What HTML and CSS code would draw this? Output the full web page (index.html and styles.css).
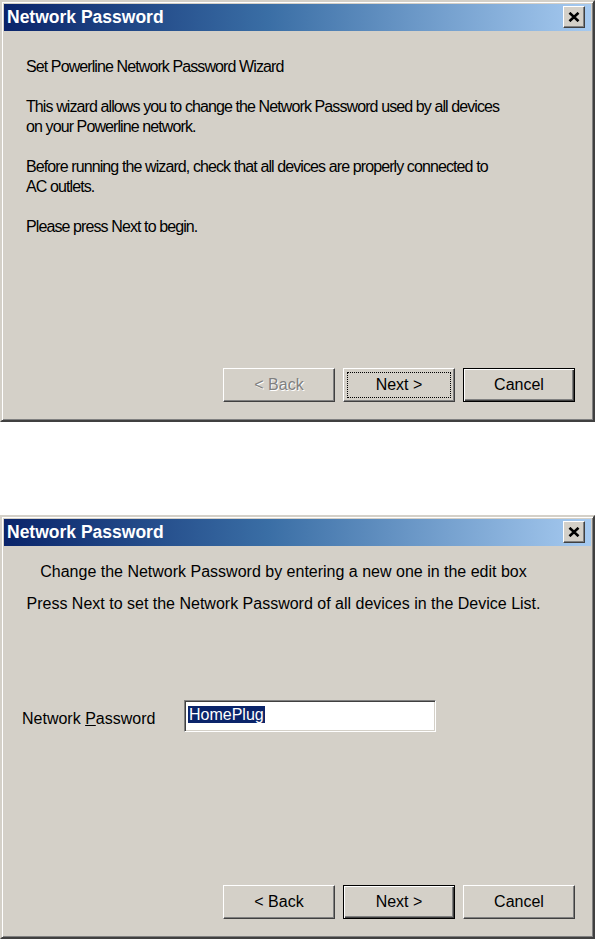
FILE: index.html
```html
<!DOCTYPE html>
<html lang="en">
  <head>
    <meta charset="UTF-8" />
    <meta name="viewport" content="width=device-width, initial-scale=1.0" />
    <title>Network Password</title>
    <link rel="stylesheet" href="styles.css">
  </head>

  <body>
    <!-- step 1: intro -->
    <div class="dialog dialog-intro">
      <div class="titlebar">
        <span class="title">Network Password</span>
        <button class="close" type="button">
          <svg width="12" height="10" viewBox="0 0 12 10">
            <path d="M1.5 0.8 L10.5 9.2 M10.5 0.8 L1.5 9.2" stroke="#000" stroke-width="2.6" />
          </svg>
        </button>
      </div>

      <div class="body intro">
        <p>Set Powerline Network Password Wizard</p>
        <p>This wizard allows you to change the Network Password used by all devices on your Powerline network.</p>
        <p>Before running the wizard, check that all devices are properly connected to AC outlets.</p>
        <p>Please press Next to begin.</p>
      </div>

      <div class="buttons">
        <button class="btn" type="button" disabled>&lt; Back</button>
        <button class="btn focused" type="button"><span class="focus">Next &gt;</span></button>
        <button class="btn default" type="button">Cancel</button>
      </div>
    </div>

    <!-- step 2: enter password -->
    <div class="dialog dialog-edit">
      <div class="titlebar">
        <span class="title">Network Password</span>
        <button class="close" type="button">
          <svg width="12" height="10" viewBox="0 0 12 10">
            <path d="M1.5 0.8 L10.5 9.2 M10.5 0.8 L1.5 9.2" stroke="#000" stroke-width="2.6" />
          </svg>
        </button>
      </div>

      <div class="body centered">
        <p class="line1">Change the Network Password by entering a new one in the edit box</p>
        <p class="line2">Press Next to set the Network Password of all devices in the Device List.</p>

        <div class="field-row">
          <label for="pw">Network <u>P</u>assword</label>
          <div class="edit" id="pw"><span class="sel">HomePlug</span></div>
        </div>
      </div>

      <div class="buttons">
        <button class="btn" type="button">&lt; Back</button>
        <button class="btn default" type="button">Next &gt;</button>
        <button class="btn" type="button">Cancel</button>
      </div>
    </div>
  </body>
</html>
```

FILE: styles.css
```css
* {
  margin: 0;
  padding: 0;
  box-sizing: border-box;
}

body {
  font-family: "Liberation Sans", Arial, sans-serif;
  font-size: 16px;
  line-height: 20px;
  color: #000;
  background: #fff;
  width: 595px;
}

.dialog {
  width: 595px;
  background: #d4d0c8;
  border: 2px solid;
  border-color: #d4d0c8 #404040 #404040 #d4d0c8;
  box-shadow: inset 1px 1px #fff, inset -1px -1px #808080;
  padding: 2px;
  display: flex;
  flex-direction: column;
}

.dialog-intro {
  height: 422px;
}

.dialog-edit {
  height: 424px;
  margin-top: 93px;
}

.titlebar {
  height: 27px;
  display: flex;
  align-items: center;
  justify-content: space-between;
  padding: 0 6px 1px 3px;
  background: linear-gradient(to right, #0a246a, #3a6ea5 45%, #a6caf0);
}

.title {
  color: #fff;
  font-weight: bold;
  font-size: 17.5px;
}

.close {
  width: 22px;
  height: 22px;
  background: #d4d0c8;
  border: 1px solid;
  border-color: #fff #404040 #404040 #fff;
  box-shadow: inset -1px -1px #808080;
  display: flex;
  align-items: center;
  justify-content: center;
}

.body {
  flex: 1;
}

.body.intro {
  padding: 26px 85px 0 22px;
  letter-spacing: -0.9px;
}

.intro p {
  margin-bottom: 20px;
}

.body.centered {
  padding: 16px 46px 0 18px;
}

.centered p {
  text-align: center;
  white-space: nowrap;
}

.centered .line2 {
  margin-top: 12px;
}

.field-row {
  display: flex;
  align-items: center;
  margin-top: 86px;
}

.field-row label {
  width: 162px;
  padding-top: 5px;
}

.edit {
  width: 252px;
  height: 32px;
  background: #fff;
  border: 1px solid;
  border-color: #808080 #fff #fff #808080;
  box-shadow: inset 1px 1px #404040, inset -1px -1px #d4d0c8;
  padding: 4px 0 0 3px;
}

.sel {
  background: #0a246a;
  color: #fff;
  padding: 0 1px;
}

.buttons {
  display: flex;
  justify-content: flex-end;
  gap: 8px;
  padding: 0 16px 16px 0;
}

.btn {
  width: 112px;
  height: 34px;
  font: inherit;
  color: #000;
  background: #d4d0c8;
  border: 1px solid;
  border-color: #fff #404040 #404040 #fff;
  box-shadow: inset -1px -1px #808080;
  display: flex;
  align-items: center;
  justify-content: center;
}

.btn:disabled {
  color: #808080;
  text-shadow: 1px 1px #fff;
}

.btn.default {
  border-color: #000;
  box-shadow: inset 1px 1px #fff, inset -1px -1px #404040, inset -2px -2px #808080;
}

.btn.focused {
  padding: 3px;
}

.focus {
  flex: 1;
  align-self: stretch;
  display: flex;
  align-items: center;
  justify-content: center;
  border: 1px dotted #000;
}
```
